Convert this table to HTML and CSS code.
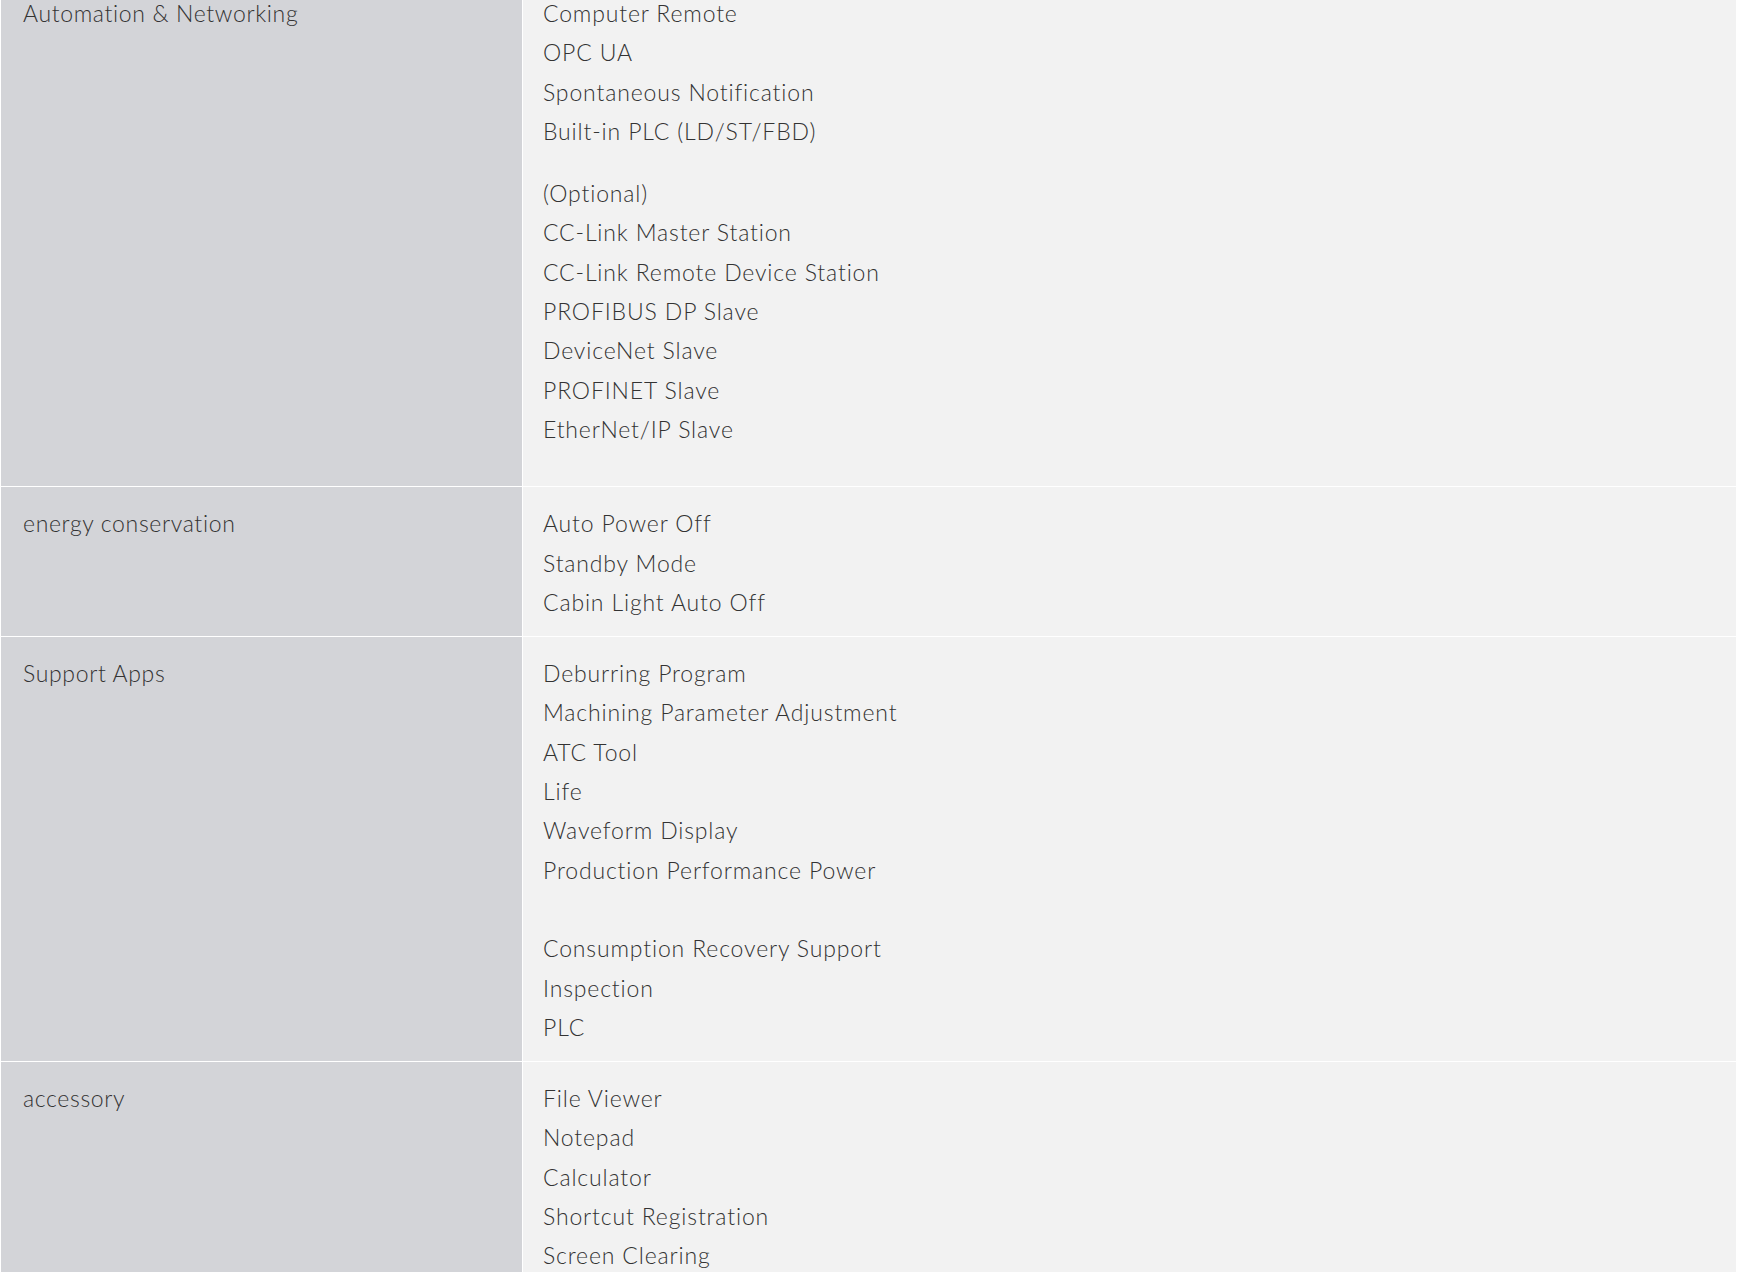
FILE: index.html
```html
<!DOCTYPE html>
<html>
<head>
<title>Specifications</title>
<meta name="viewport" content="width=device-width, initial-scale=1.0">
<link rel="stylesheet" href="styles.css">
</head>
<body>

<table class="spec-table">
  <tr>
    <th>Automation &amp; Networking</th>
    <td class="groups">
      <p>Computer Remote<br>OPC UA<br>Spontaneous Notification<br>Built-in PLC (LD/ST/FBD)</p>
      <p>(Optional)<br>CC-Link Master Station<br>CC-Link Remote Device Station<br>PROFIBUS DP Slave<br>DeviceNet Slave<br>PROFINET Slave<br>EtherNet/IP Slave</p>
    </td>
  </tr>
  <tr>
    <th>energy conservation</th>
    <td>
      <p>Auto Power Off<br>Standby Mode<br>Cabin Light Auto Off</p>
    </td>
  </tr>
  <tr>
    <th>Support Apps</th>
    <td>
      <p>Deburring Program<br>Machining Parameter Adjustment<br>ATC Tool<br>Life<br>Waveform Display<br>Production Performance Power<br><br>Consumption Recovery Support<br>Inspection<br>PLC</p>
    </td>
  </tr>
  <tr>
    <th>accessory</th>
    <td>
      <p>File Viewer<br>Notepad<br>Calculator<br>Shortcut Registration<br>Screen Clearing</p>
    </td>
  </tr>
</table>

</body>
</html>
```

FILE: styles.css
```css
body {
  margin: 0;
  background-color: #fff;
  font-family: Lato, "Liberation Sans", sans-serif;
  color: #333;
}

/* bảng thông số, cuộn lên một chút như ảnh gốc */
.spec-table {
  width: 1737px;
  margin-top: -24px;
  table-layout: fixed;
  border-collapse: separate;
  border-spacing: 1px;
  font-size: 23px;
  font-weight: 300;
  line-height: 39.3px;
  letter-spacing: 0.85px;
}
.spec-table th,
.spec-table td {
  padding: 17px 20px 14px;
  vertical-align: top;
  text-align: left;
}
.spec-table th {
  width: 479px;
  padding-left: 22px;
  font-weight: 300;
  letter-spacing: 0.65px;
  background-color: #d3d4d8;
}
.spec-table td {
  background-color: #f2f2f2;
}
.spec-table p {
  margin: 0;
}
.spec-table .groups p {
  margin-bottom: 1em;
}
```
